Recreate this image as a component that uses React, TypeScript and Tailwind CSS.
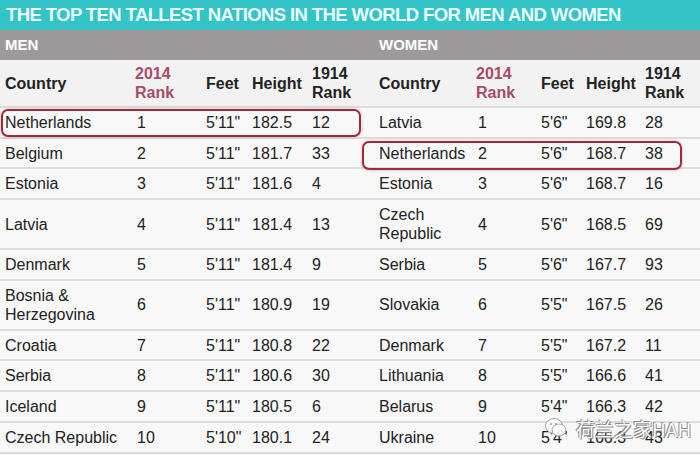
import React from "react";

type Row = {
    country: string;
    rank: string;
    feet: string;
    height: string;
    old: string;
};

const men: Row[] = [
    { country: "Netherlands", rank: "1", feet: "5'11\"", height: "182.5", old: "12" },
    { country: "Belgium", rank: "2", feet: "5'11\"", height: "181.7", old: "33" },
    { country: "Estonia", rank: "3", feet: "5'11\"", height: "181.6", old: "4" },
    { country: "Latvia", rank: "4", feet: "5'11\"", height: "181.4", old: "13" },
    { country: "Denmark", rank: "5", feet: "5'11\"", height: "181.4", old: "9" },
    { country: "Bosnia & Herzegovina", rank: "6", feet: "5'11\"", height: "180.9", old: "19" },
    { country: "Croatia", rank: "7", feet: "5'11\"", height: "180.8", old: "22" },
    { country: "Serbia", rank: "8", feet: "5'11\"", height: "180.6", old: "30" },
    { country: "Iceland", rank: "9", feet: "5'11\"", height: "180.5", old: "6" },
    { country: "Czech Republic", rank: "10", feet: "5'10\"", height: "180.1", old: "24" },
];

const women: Row[] = [
    { country: "Latvia", rank: "1", feet: "5'6\"", height: "169.8", old: "28" },
    { country: "Netherlands", rank: "2", feet: "5'6\"", height: "168.7", old: "38" },
    { country: "Estonia", rank: "3", feet: "5'6\"", height: "168.7", old: "16" },
    { country: "Czech Republic", rank: "4", feet: "5'6\"", height: "168.5", old: "69" },
    { country: "Serbia", rank: "5", feet: "5'6\"", height: "167.7", old: "93" },
    { country: "Slovakia", rank: "6", feet: "5'5\"", height: "167.5", old: "26" },
    { country: "Denmark", rank: "7", feet: "5'5\"", height: "167.2", old: "11" },
    { country: "Lithuania", rank: "8", feet: "5'5\"", height: "166.6", old: "41" },
    { country: "Belarus", rank: "9", feet: "5'4\"", height: "166.3", old: "42" },
    { country: "Ukraine", rank: "10", feet: "5'4\"", height: "166.3", old: "43" },
];

// rows 4 and 6 wrap onto two lines
const tallRows = [3, 5];

const cols = "grid grid-cols-[130px_71px_46px_60px_67px_97px_65px_45px_59px_55px] pl-[5px]";

const App: React.FC = () => {
    return (
        <div className="w-[700px] h-[455px] overflow-hidden bg-[#f7f7f7] text-[#222] font-['Liberation_Sans',Arial,sans-serif] relative">
            {/* titre */}
            <div className="h-[30px] bg-[#34c3c7] flex items-center pl-[6px]">
                <div className="text-[18.5px] font-bold text-[#eafcfc] tracking-[-0.6px] leading-none">
                    THE TOP TEN TALLEST NATIONS IN THE WORLD FOR MEN AND WOMEN
                </div>
            </div>

            <div className={`${cols} h-[30px] bg-[#9e9a9b] items-center text-[15px] font-bold text-white`}>
                <div className="col-span-5">MEN</div>
                <div className="col-span-5">WOMEN</div>
            </div>

            <div className={`${cols} h-[48px] bg-[#f2f2f2] items-center text-[16px] font-bold leading-[19px] border-b-2 border-[#dddddd]`}>
                {[0, 1].map((k) => (
                    <React.Fragment key={k}>
                        <div>Country</div>
                        <div className="text-[#a84a6c]">2014<br />Rank</div>
                        <div>Feet</div>
                        <div>Height</div>
                        <div>1914<br />Rank</div>
                    </React.Fragment>
                ))}
            </div>

            {men.map((m, i) => {
                const w = women[i];
                const tall = tallRows.includes(i);
                return (
                    <div
                        key={i}
                        className={`${cols} ${tall ? "h-[50px]" : "h-[30.7px]"} items-center text-[16px] leading-[19px] border-b-2 border-[#dcdcdc] bg-[#f8f8f8]`}
                    >
                        <div className="pr-2">{m.country}</div>
                        <div className="pl-[2px]">{m.rank}</div>
                        <div>{m.feet}</div>
                        <div>{m.height}</div>
                        <div>{m.old}</div>
                        <div className="pr-2">{w.country}</div>
                        <div className="pl-[2px]">{w.rank}</div>
                        <div>{w.feet}</div>
                        <div>{w.height}</div>
                        <div>{w.old}</div>
                    </div>
                );
            })}

            {/* encadrés rouges */}
            <div className="absolute left-[1px] top-[109px] w-[360px] h-[28px] rounded-[7px] border-2 border-[#9e2a3e] shadow-[0_0_3px_rgba(220,80,100,0.5)]" />
            <div className="absolute left-[362px] top-[141px] w-[320px] h-[29px] rounded-[7px] border-2 border-[#9e2a3e] shadow-[0_0_3px_rgba(220,80,100,0.5)]" />

            {/* filigrane */}
            <div className="absolute left-[544px] top-[417px] flex items-center gap-[8px] opacity-90">
                <svg width="24" height="22" viewBox="0 0 24 22">
                    <ellipse cx="10" cy="9" rx="8.5" ry="7.5" fill="white" stroke="#999" strokeWidth="1" />
                    <ellipse cx="15" cy="13" rx="7" ry="6" fill="white" stroke="#999" strokeWidth="1" />
                    <circle cx="7" cy="7" r="1" fill="#999" />
                    <circle cx="12" cy="7" r="1" fill="#999" />
                </svg>
                <div className="text-[19px] text-white leading-none font-['Noto_Sans_CJK_SC',sans-serif] [text-shadow:0_0_1px_#666,1px_1px_0_#888,-1px_-1px_0_#888]">
                    荷兰之家HAH
                </div>
            </div>
        </div>
    );
};

export default App;
